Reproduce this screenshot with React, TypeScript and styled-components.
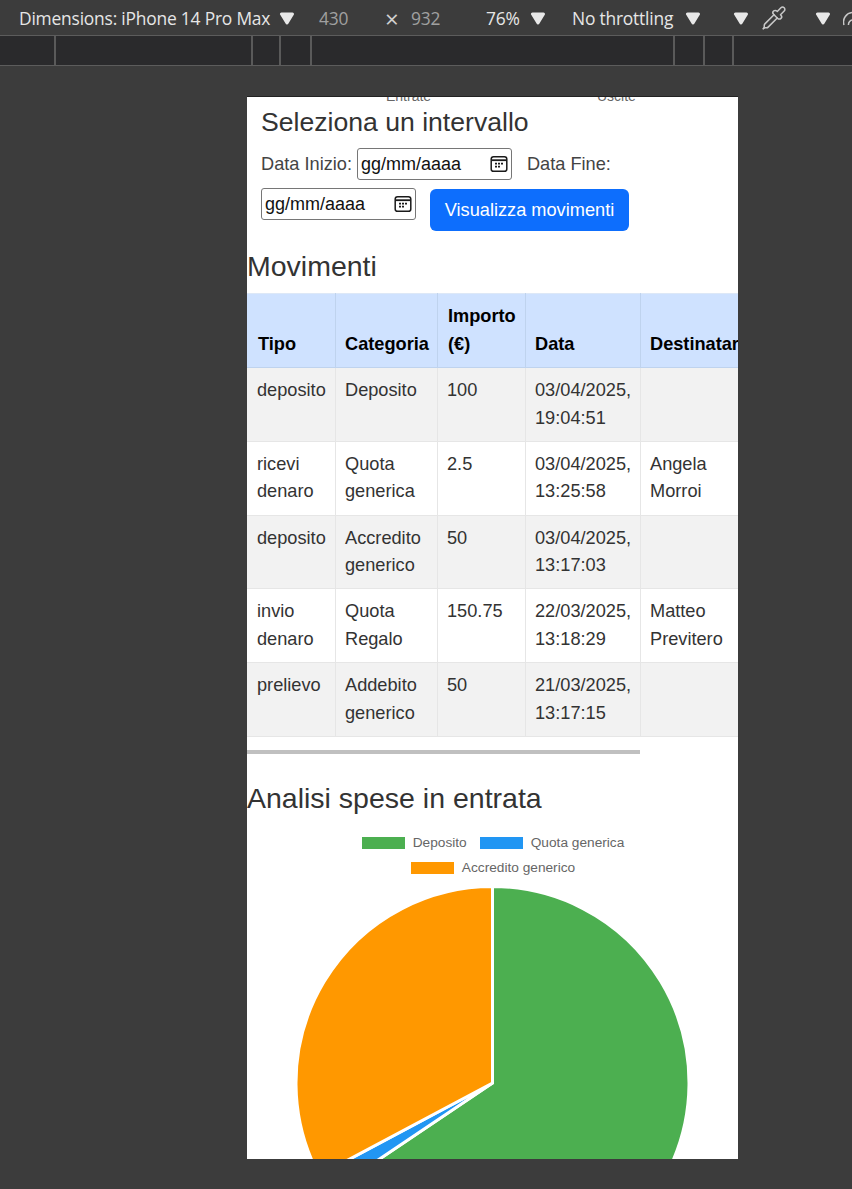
import styled, { createGlobalStyle } from "styled-components";
import { Pipette } from "lucide-react";

const GlobalStyle = createGlobalStyle`
  html, body {
    margin: 0;
    padding: 0;
    background: #3c3c3c;
  }
`;

const Screen = styled.div`
  width: 852px;
  height: 1189px;
  overflow: hidden;
  background: #3c3c3c;
  font-family: "Liberation Sans", Arial, sans-serif;
`;

const Toolbar = styled.div`
  display: flex;
  align-items: center;
  height: 35px;
  padding-left: 19px;
  border-bottom: 1px solid #5c5c5c;
  font-family: "Open Sans", sans-serif;
  font-size: 17.4px;
  letter-spacing: -0.2px;
  color: #e6e6e6;
  white-space: nowrap;
  overflow: hidden;
`;

const ToolText = styled.span<{ $width: number; $muted?: boolean }>`
  width: ${(p) => p.$width}px;
  flex: none;
  color: ${(p) => (p.$muted ? "#a0a0a0" : "#e6e6e6")};
`;

const Caret = styled.svg<{ $gap: number }>`
  flex: none;
  width: 16px;
  height: 13px;
  margin-top: 2px;
  margin-right: ${(p) => p.$gap}px;
`;

const Times = styled.span`
  width: 26px;
  flex: none;
  margin-top: 3px;
  font-size: 24px;
  line-height: 24px;
  color: #d0d0d0;
`;

const Ruler = styled.div`
  display: flex;
  height: 29px;
  background: #2a2a2c;
  border-bottom: 1px solid #5c5c5c;
`;

const RulerCell = styled.div<{ $width: number }>`
  width: ${(p) => p.$width}px;
  flex: none;
  border-right: 2px solid #5a5a5a;
  box-sizing: border-box;
`;

const Stage = styled.div`
  padding: 31px 0 0 247px;
`;

const Device = styled.div`
  width: 491px;
  height: 1062px;
  overflow: hidden;
  background: #fff;
  border-top: 1px solid #222;
  margin-top: -1px;
  color: #333;
`;

const ClippedTabs = styled.div`
  display: flex;
  align-items: flex-end;
  height: 4px;
  overflow: hidden;
  padding-left: 139px;
  font-size: 14px;
  line-height: 16px;
  color: #666;
`;

const ClippedTab = styled.span<{ $width: number }>`
  width: ${(p) => p.$width}px;
  flex: none;
  margin-bottom: -3px;
`;

const Filters = styled.section`
  padding: 5px 0 0 14px;
`;

const RangeTitle = styled.h2`
  margin: 0;
  font-size: 26.6px;
  font-weight: 400;
  line-height: 33px;
`;

const FilterRow = styled.div`
  display: flex;
  flex-wrap: wrap;
  align-items: flex-start;
  row-gap: 8px;
  margin-top: 9px;
`;

const FieldLabel = styled.label<{ $gap: number }>`
  font-size: 18.2px;
  line-height: 32px;
  margin-right: ${(p) => p.$gap}px;
  color: #444;
`;

const DateBox = styled.div<{ $gap: number }>`
  display: flex;
  align-items: center;
  justify-content: space-between;
  box-sizing: border-box;
  width: 155px;
  height: 32px;
  padding: 0 3px 0 3px;
  margin-right: ${(p) => p.$gap}px;
  border: 1px solid #767676;
  border-radius: 3px;
  font-size: 18px;
  color: #111;
`;

const CalendarIcon = styled.svg`
  width: 18px;
  height: 18px;
  flex: none;
`;

const ShowButton = styled.button`
  width: 199px;
  height: 42px;
  margin-top: 1px;
  padding: 0;
  border: none;
  border-radius: 6px;
  background: #0d6efd;
  color: #fff;
  font-family: inherit;
  font-size: 18.2px;
`;

const SectionTitle = styled.h2<{ $top: number }>`
  margin: ${(p) => p.$top}px 0 0;
  font-size: 28.5px;
  font-weight: 400;
  line-height: 36px;
`;

const TableClip = styled.div`
  margin-top: 9px;
  overflow: hidden;
`;

const MovesTable = styled.table`
  width: 518.5px;
  table-layout: fixed;
  border-collapse: collapse;
  font-size: 18.2px;
  line-height: 27.5px;
`;

const Head = styled.th`
  height: 73px;
  padding: 9px 9px 9px 9px;
  box-sizing: border-box;
  vertical-align: bottom;
  text-align: left;
  white-space: nowrap;
  color: #000;
  background: #cfe2ff;
  border: 1px solid #bfd3ee;
  border-top-color: #dde8f7;
  border-left: none;

  &:first-child {
    padding-left: 11px;
  }
`;

const HeadWrap = styled(Head)`
  white-space: normal;
  padding-left: 10px;
`;

const Row = styled.tr<{ $striped: boolean }>`
  background: ${(p) => (p.$striped ? "#f2f2f2" : "#fff")};
`;

const Cell = styled.td`
  height: 73.8px;
  padding: 9px 8px 8px 9px;
  box-sizing: border-box;
  vertical-align: top;
  border: 1px solid #e6e6e6;
  border-left: none;

  &:first-child {
    padding-left: 10px;
  }
`;

const ScrollTrack = styled.div`
  margin-top: 13px;
  height: 4px;
`;

const ScrollThumb = styled.div`
  width: 393px;
  height: 4px;
  background: #c0c0c0;
`;

const Legend = styled.div`
  display: flex;
  flex-wrap: wrap;
  justify-content: center;
  width: 300px;
  margin: 19px 0 0 96px;
  column-gap: 13px;
  row-gap: 9px;
  font-size: 13.7px;
  line-height: 16px;
  color: #666;
`;

const LegendItem = styled.div`
  display: flex;
  align-items: center;
  gap: 8px;
`;

const LegendSwatch = styled.span<{ $color: string }>`
  width: 43px;
  height: 12px;
  background: ${(p) => p.$color};
`;

const PieChart = styled.svg`
  display: block;
  width: 491px;
  height: 300px;
  margin-top: 10px;
`;

const columns = [88.5, 102, 88, 115, 125];
const headers = ["Tipo", "Categoria", "Importo (€)", "Data", "Destinatario"];

const moves = [
  { tipo: "deposito", categoria: "Deposito", importo: "100", data: "03/04/2025, 19:04:51", dest: "" },
  { tipo: "ricevi denaro", categoria: "Quota generica", importo: "2.5", data: "03/04/2025, 13:25:58", dest: "Angela Morroi" },
  { tipo: "deposito", categoria: "Accredito generico", importo: "50", data: "03/04/2025, 13:17:03", dest: "" },
  { tipo: "invio denaro", categoria: "Quota Regalo", importo: "150.75", data: "22/03/2025, 13:18:29", dest: "Matteo Previtero" },
  { tipo: "prelievo", categoria: "Addebito generico", importo: "50", data: "21/03/2025, 13:17:15", dest: "" },
];

const slices = [
  { label: "Deposito", value: 100, color: "#4caf50" },
  { label: "Quota generica", value: 2.5, color: "#2196f3" },
  { label: "Accredito generico", value: 50, color: "#ff9800" },
];

const slicePaths = () => {
  const total = slices.reduce((sum, s) => sum + s.value, 0);
  const cx = 245.5;
  const cy = 197;
  const r = 196.5;
  let start = 0;
  return slices.map((s) => {
    const end = start + (s.value / total) * Math.PI * 2;
    const large = end - start > Math.PI ? 1 : 0;
    const x1 = cx + r * Math.sin(start);
    const y1 = cy - r * Math.cos(start);
    const x2 = cx + r * Math.sin(end);
    const y2 = cy - r * Math.cos(end);
    start = end;
    return { ...s, d: `M${cx} ${cy}L${x1} ${y1}A${r} ${r} 0 ${large} 1 ${x2} ${y2}Z` };
  });
};

const TriangleCaret = ({ gap }: { gap: number }) => (
  <Caret $gap={gap} viewBox="0 0 16 13">
    <path d="M2.5 2h11L8 11z" fill="#e8e8e8" stroke="#e8e8e8" strokeWidth="3" strokeLinejoin="round" />
  </Caret>
);

const DateInput = ({ gap }: { gap: number }) => (
  <DateBox $gap={gap}>
    gg/mm/aaaa
    <CalendarIcon viewBox="0 0 18 18">
      <rect x="1.2" y="1.7" width="15.6" height="14.6" rx="2.4" fill="none" stroke="#1a1a1a" strokeWidth="1.5" />
      <path d="M1.5 5.2h15" stroke="#1a1a1a" strokeWidth="1.8" />
      <path d="M5 8.7h2M8 8.7h2M11 8.7h2M5 11.7h2M8 11.7h2" stroke="#1a1a1a" strokeWidth="1.7" />
    </CalendarIcon>
  </DateBox>
);

export default function App() {
  return (
    <Screen>
      <GlobalStyle />
      <Toolbar>
        <ToolText $width={260}>Dimensions: iPhone 14 Pro Max</ToolText>
        <TriangleCaret gap={24} />
        <ToolText $width={66} $muted>430</ToolText>
        <Times>×</Times>
        <ToolText $width={75} $muted>932</ToolText>
        <ToolText $width={44}>76%</ToolText>
        <TriangleCaret gap={26} />
        <ToolText $width={113}>No throttling</ToolText>
        <TriangleCaret gap={32} />
        <TriangleCaret gap={12} />
        <Pipette size={26} color="#c8c8c8" strokeWidth={1.4} style={{ flex: "none", marginRight: 28 }} />
        <TriangleCaret gap={12} />
        <svg width="10" height="16" viewBox="0 0 10 16" style={{ flex: "none", marginTop: 3 }}>
          <path d="M1 14a9.5 9.5 0 0 1 9-12.5M5.5 14a4.5 4.5 0 0 1 4.5-5" fill="none" stroke="#c8c8c8" strokeWidth="1.5" />
        </svg>
      </Toolbar>
      <Ruler>
        {[56, 197, 28, 31, 363, 30, 29].map((w, i) => (
          <RulerCell key={i} $width={w} />
        ))}
      </Ruler>
      <Stage>
        <Device>
          <ClippedTabs>
            <ClippedTab $width={211}>Entrate</ClippedTab>
            <ClippedTab $width={60}>Uscite</ClippedTab>
          </ClippedTabs>
          <Filters>
            <RangeTitle>Seleziona un intervallo</RangeTitle>
            <FilterRow>
              <FieldLabel $gap={5}>Data Inizio:</FieldLabel>
              <DateInput gap={15} />
              <FieldLabel $gap={20}>Data Fine:</FieldLabel>
              <DateInput gap={14} />
              <ShowButton>Visualizza movimenti</ShowButton>
            </FilterRow>
          </Filters>
          <SectionTitle $top={17}>Movimenti</SectionTitle>
          <TableClip>
            <MovesTable>
              <colgroup>
                {columns.map((w) => (
                  <col key={w} width={w} />
                ))}
              </colgroup>
              <thead>
                <tr>
                  {headers.map((h) =>
                    h === "Importo (€)" ? <HeadWrap key={h}>{h}</HeadWrap> : <Head key={h}>{h}</Head>
                  )}
                </tr>
              </thead>
              <tbody>
                {moves.map((m, i) => (
                  <Row key={i} $striped={i % 2 === 0}>
                    <Cell>{m.tipo}</Cell>
                    <Cell>{m.categoria}</Cell>
                    <Cell>{m.importo}</Cell>
                    <Cell>{m.data}</Cell>
                    <Cell>{m.dest}</Cell>
                  </Row>
                ))}
              </tbody>
            </MovesTable>
          </TableClip>
          <ScrollTrack>
            <ScrollThumb />
          </ScrollTrack>
          <SectionTitle $top={26}>Analisi spese in entrata</SectionTitle>
          <Legend>
            {slices.map((s) => (
              <LegendItem key={s.label}>
                <LegendSwatch $color={s.color} />
                {s.label}
              </LegendItem>
            ))}
          </Legend>
          <PieChart viewBox="0 0 491 300">
            {slicePaths().map((s) => (
              <path key={s.label} d={s.d} fill={s.color} stroke="#fff" strokeWidth="3" />
            ))}
          </PieChart>
        </Device>
      </Stage>
    </Screen>
  );
}
